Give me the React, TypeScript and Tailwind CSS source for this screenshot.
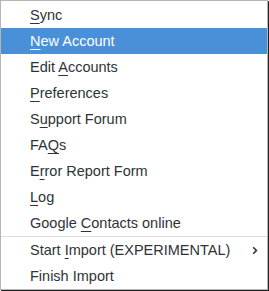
import { ReactNode } from "react";

type Item = {
  pre: string;
  key?: string;
  post: string;
  active?: boolean;
  submenu?: boolean;
  sep?: boolean;
};

const items: Item[] = [
  { pre: "", key: "S", post: "ync" },
  { pre: "", key: "N", post: "ew Account", active: true },
  { pre: "Edit ", key: "A", post: "ccounts" },
  { pre: "", key: "P", post: "references" },
  { pre: "S", key: "u", post: "pport Forum" },
  { pre: "FA", key: "Q", post: "s" },
  { pre: "E", key: "r", post: "ror Report Form" },
  { pre: "", key: "L", post: "og" },
  { pre: "Google ", key: "C", post: "ontacts online", sep: true },
  { pre: "Start ", key: "I", post: "mport (EXPERIMENTAL)", submenu: true },
  { pre: "Finish Import", post: "" },
];

const Row = ({ item }: { item: Item }): ReactNode => (
  <div
    className={`flex h-[26px] items-center pl-[29px] pr-[9px] ${
      item.active ? "bg-[#4a90d9] text-white" : "text-[#2e3436]"
    }`}
  >
    <span className="flex-1 whitespace-nowrap">
      {item.pre}
      {item.key && (
        <span className="underline underline-offset-[3px] decoration-1">{item.key}</span>
      )}
      {item.post}
    </span>
    {item.submenu && (
      <svg width="6" height="9" viewBox="0 0 6 9">
        <path d="M1.2 1.2 L4.4 4.5 L1.2 7.8" fill="none" stroke="#2e3436" strokeWidth="1.6" />
      </svg>
    )}
  </div>
);

export default function App() {
  return (
    <div className="w-[269px] h-[291px] bg-white">
      <div
        className="w-[268px] h-[290px] border border-[#b6b6b3] bg-white py-[1px] text-[14.5px] leading-none shadow-[1px_1px_0_#222]"
        style={{ fontFamily: '"Liberation Sans", Arial, sans-serif' }}
      >
        {items.map((item, i) => (
          <div key={i}>
            <Row item={item} />
            {item.sep && <div className="h-px bg-[#dcdcdc]" />}
          </div>
        ))}
      </div>
    </div>
  );
}
